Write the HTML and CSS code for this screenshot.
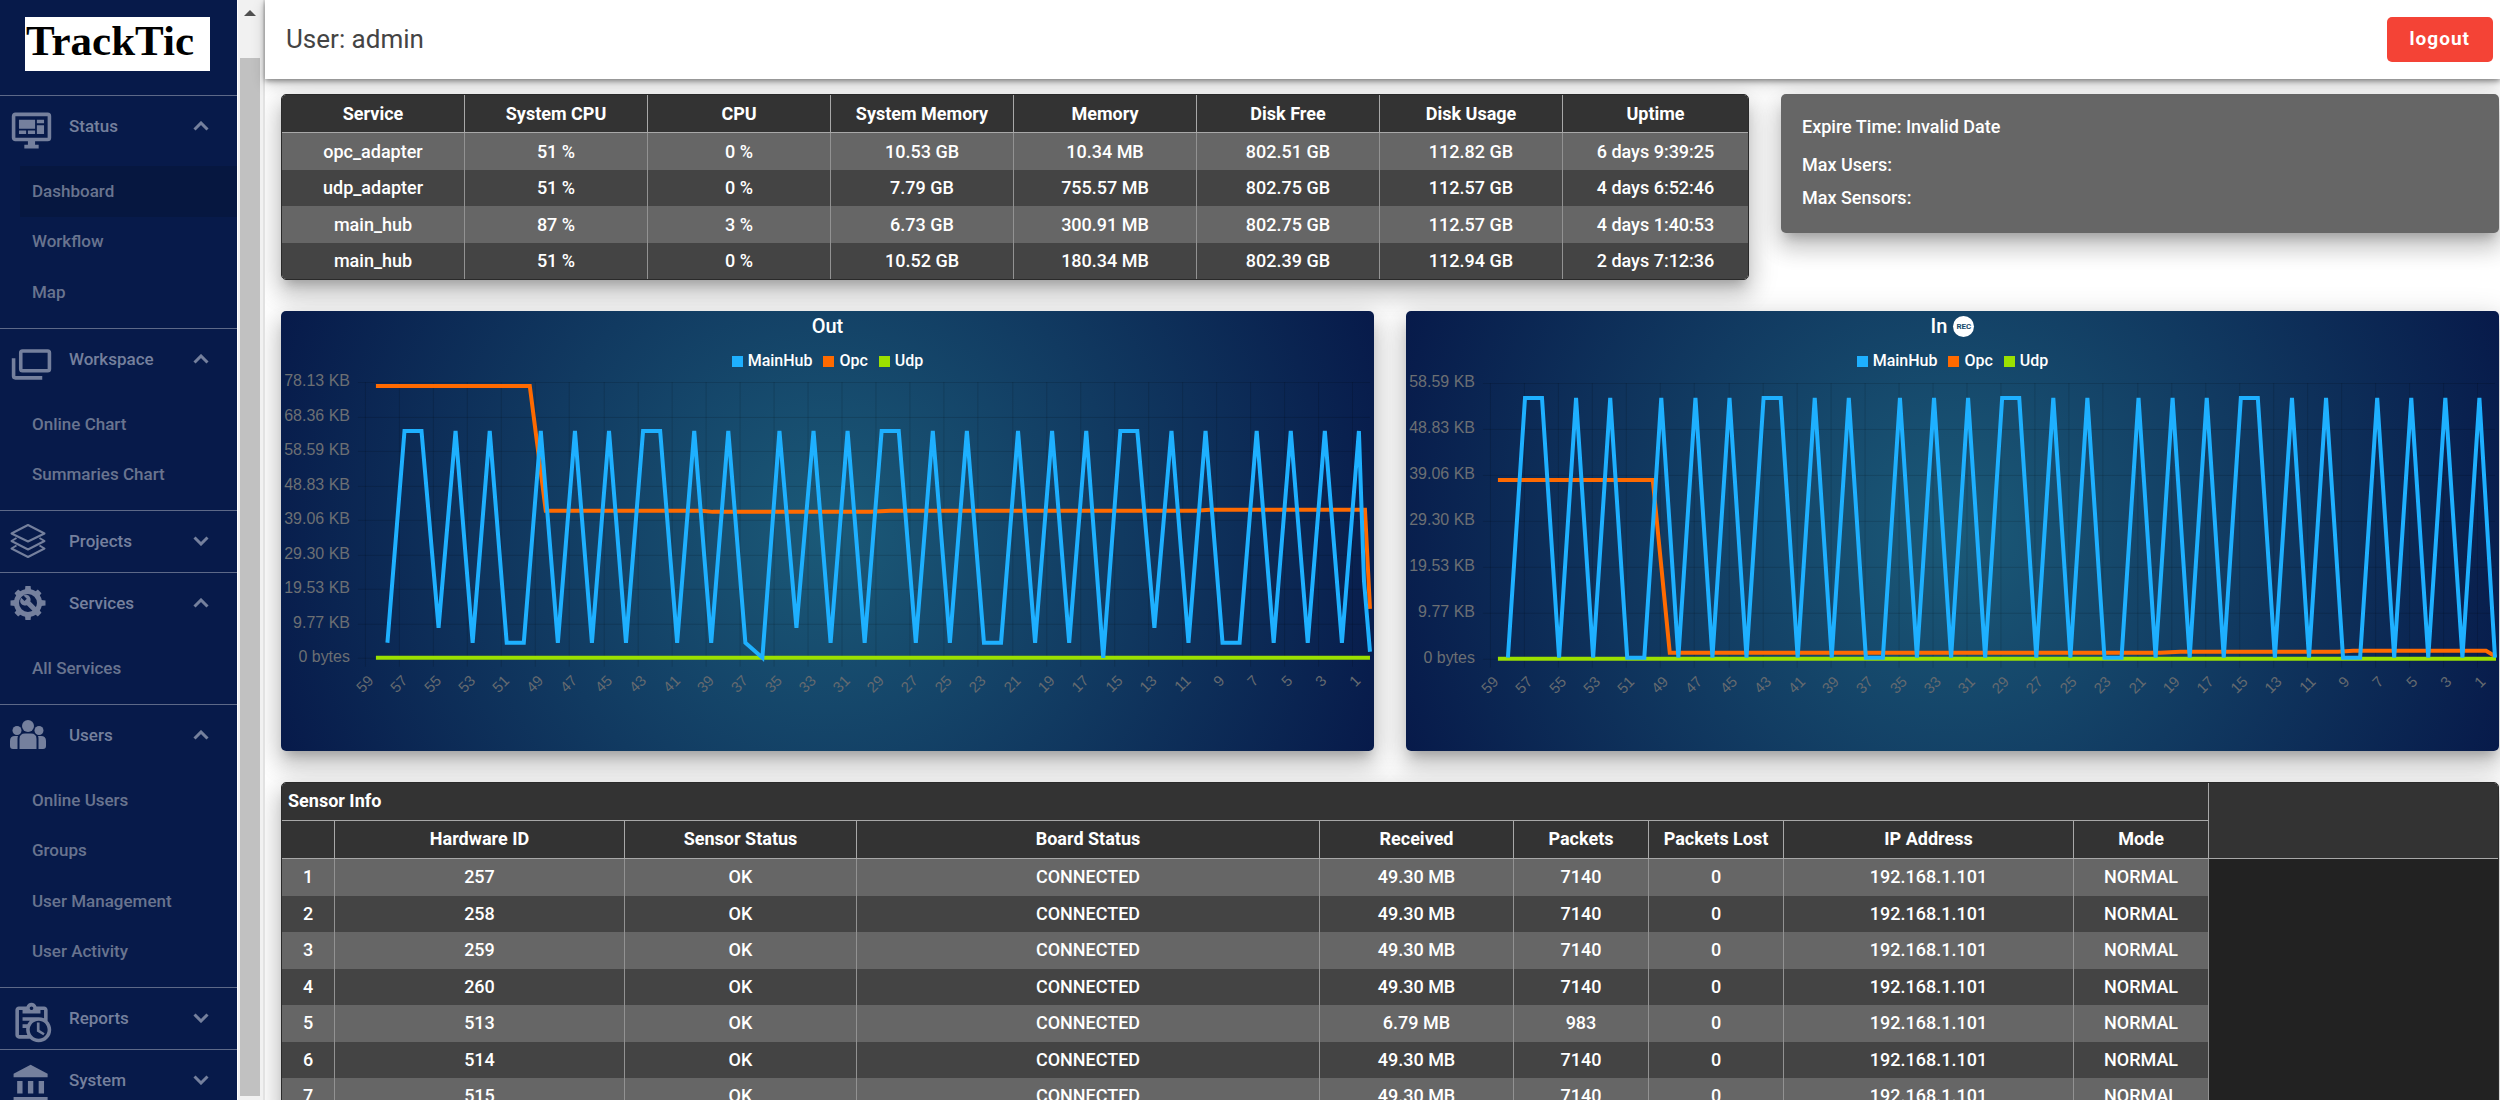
FILE: index.html
```html
<!DOCTYPE html>
<html lang="en">
<head>
<meta charset="utf-8">
<meta name="viewport" content="width=device-width, initial-scale=1">
<title>TrackTic</title>
<link rel="stylesheet" href="styles.css">
</head>
<body>
<div class="app">
  <aside class="sidebar">
    <div class="brand"><span class="logo">TrackTic</span></div>
    <nav class="menu" aria-label="Main">
      <section class="group">
        <button class="group-head" type="button" aria-expanded="true">
          <svg class="icon" viewBox="0 0 24 24"><path d="M21,16V4H3V16H21M21,2A2,2 0 0,1 23,4V16A2,2 0 0,1 21,18H14V20H16V22H8V20H10V18H3C1.89,18 1,17.1 1,16V4C1,2.89 1.89,2 3,2H21M5,6H14V11H5V6M15,6H19V8H15V6M19,9V14H15V9H19M5,12H9V14H5V12M10,12H14V14H10V12Z"/></svg>
          <span class="group-name">Status</span>
          <svg class="chevron" viewBox="0 0 16 10"><path d="M1.500 8.500 8 2l6.500 6.500"/></svg>
        </button>
        <div class="items">
          <a class="item active" href="#dashboard" aria-current="page">Dashboard</a>
          <a class="item" href="#workflow">Workflow</a>
          <a class="item" href="#map">Map</a>
        </div>
      </section>
      <section class="group">
        <button class="group-head" type="button" aria-expanded="true">
          <svg class="icon" viewBox="0 0 24 24"><path fill-rule="evenodd" d="M7 4H21A2 2 0 0 1 23 6V15A2 2 0 0 1 21 17H7A2 2 0 0 1 5 15V6A2 2 0 0 1 7 4ZM7 6V15H21V6ZM3 19H18V21H3A2 2 0 0 1 1 19V9H3Z"/></svg>
          <span class="group-name">Workspace</span>
          <svg class="chevron" viewBox="0 0 16 10"><path d="M1.500 8.500 8 2l6.500 6.500"/></svg>
        </button>
        <div class="items">
          <a class="item" href="#online-chart">Online Chart</a>
          <a class="item" href="#summaries-chart">Summaries Chart</a>
        </div>
      </section>
      <section class="group">
        <button class="group-head" type="button" aria-expanded="false">
          <svg class="icon compact" viewBox="0 0 36 36"><g fill="none" stroke="currentColor" stroke-width="2" stroke-linejoin="round"><path d="M18 2 34.500 10.500 18 18.500 1.500 10.500Z"/><path d="M6.500 15 1.500 18 18 26.500 34.500 18 29.500 15"/><path d="M6.500 22.500 1.500 25.500 18 34 34.500 25.500 29.500 22.500"/></g></svg>
          <span class="group-name">Projects</span>
          <svg class="chevron" viewBox="0 0 16 10"><path d="M1.500 1.500 8 8l6.500-6.500"/></svg>
        </button>
      </section>
      <section class="group">
        <button class="group-head" type="button" aria-expanded="true">
          <svg class="icon compact" viewBox="0 0 36 36"><circle cx="18" cy="18" r="11.500" fill="none" stroke="currentColor" stroke-width="5"/><path d="M15 5 15.400 1H20.600L21 5ZM15 31 15.400 35H20.600L21 31ZM5 15 .500 15.400V20.600L5 21ZM31 15 35.500 15.400V20.600L31 21Z"/><path transform="rotate(45 18 18)" d="M15 5 15.400 1.500H20.600L21 5ZM15 31 15.400 34.500H20.600L21 31ZM5 15 1.500 15.400V20.600L5 21ZM31 15 34.500 15.400V20.600L31 21Z"/><path d="M11.200 12.700 14.500 16 16.800 13.700 13.500 10.400C16 9.200 18.600 10 19.900 12.200 20.700 13.600 20.800 15 20.300 16.600L28 24.300 24.500 27.800 16.900 20.200C14.900 20.900 12.800 20.400 11.400 19 9.800 17.300 9.700 14.800 11.200 12.700Z"/></svg>
          <span class="group-name">Services</span>
          <svg class="chevron" viewBox="0 0 16 10"><path d="M1.500 8.500 8 2l6.500 6.500"/></svg>
        </button>
        <div class="items">
          <a class="item" href="#all-services">All Services</a>
        </div>
      </section>
      <section class="group">
        <button class="group-head" type="button" aria-expanded="true">
          <svg class="icon compact" viewBox="0 0 36 36"><circle cx="18" cy="9" r="6"/><circle cx="7" cy="13.500" r="4.500"/><circle cx="29" cy="13.500" r="4.500"/><path d="M9.500 32V22Q9.500 16.500 15 16.500H21Q26.500 16.500 26.500 22V32ZM8 19Q7.500 20 7.500 22V32H3Q0 32 0 29V24Q0 19 5 19ZM28 19Q28.500 20 28.500 22V32H33Q36 32 36 29V24Q36 19 31 19Z"/></svg>
          <span class="group-name">Users</span>
          <svg class="chevron" viewBox="0 0 16 10"><path d="M1.500 8.500 8 2l6.500 6.500"/></svg>
        </button>
        <div class="items">
          <a class="item" href="#online-users">Online Users</a>
          <a class="item" href="#groups">Groups</a>
          <a class="item" href="#user-management">User Management</a>
          <a class="item" href="#user-activity">User Activity</a>
        </div>
      </section>
      <section class="group">
        <button class="group-head" type="button" aria-expanded="false">
          <svg class="icon" viewBox="0 0 24 24"><path d="M21 11.110V5C21 3.900 20.110 3 19 3H14.820C14.400 1.840 13.300 1 12 1S9.600 1.840 9.180 3H5C3.900 3 3 3.900 3 5V19C3 20.110 3.900 21 5 21H11.110C12.370 22.240 14.090 23 16 23C19.870 23 23 19.870 23 16C23 14.090 22.240 12.370 21 11.110M12 3C12.550 3 13 3.450 13 4S12.550 5 12 5 11 4.550 11 4 11.450 3 12 3M5 19V5H7V7H17V5H19V9.680C18.090 9.250 17.080 9 16 9H7V11H11.100C10.500 11.570 10.040 12.250 9.680 13H7V15H9.080C9.030 15.330 9 15.660 9 16C9 17.080 9.250 18.090 9.680 19H5M16 21C13.240 21 11 18.760 11 16C11 13.240 13.240 11 16 11C18.760 11 21 13.240 21 16C21 18.760 18.760 21 16 21M16.500 16.250L19.360 17.940L18.610 19.160L15 17V12H16.500V16.250Z"/></svg>
          <span class="group-name">Reports</span>
          <svg class="chevron" viewBox="0 0 16 10"><path d="M1.500 1.500 8 8l6.500-6.500"/></svg>
        </button>
      </section>
      <section class="group">
        <button class="group-head" type="button" aria-expanded="false">
          <svg class="icon" viewBox="0 0 24 24"><path d="M11.500,1L2,6V8H21V6M16,10V17H19V10M2,22H21V19H2M10,10V17H13V10M4,10V17H7V10H4Z"/></svg>
          <span class="group-name">System</span>
          <svg class="chevron" viewBox="0 0 16 10"><path d="M1.500 1.500 8 8l6.500-6.500"/></svg>
        </button>
      </section>
    </nav>
  </aside>
  <div class="scrollbar" aria-hidden="true">
    <span class="scroll-up"></span>
    <span class="scroll-thumb"></span>
  </div>
  <div class="page">
    <header class="topbar">
      <span class="user">User: admin</span>
      <button class="logout" type="button">logout</button>
    </header>
    <main class="content">
      <section class="card services">
        <table class="grid">
          <colgroup><col class="c-metric" span="7"><col></colgroup>
          <thead>
            <tr><th>Service</th><th>System CPU</th><th>CPU</th><th>System Memory</th><th>Memory</th><th>Disk Free</th><th>Disk Usage</th><th>Uptime</th></tr>
          </thead>
          <tbody>
            <tr><td>opc_adapter</td><td>51 %</td><td>0 %</td><td>10.53 GB</td><td>10.34 MB</td><td>802.51 GB</td><td>112.82 GB</td><td>6 days 9:39:25</td></tr>
            <tr><td>udp_adapter</td><td>51 %</td><td>0 %</td><td>7.79 GB</td><td>755.57 MB</td><td>802.75 GB</td><td>112.57 GB</td><td>4 days 6:52:46</td></tr>
            <tr><td>main_hub</td><td>87 %</td><td>3 %</td><td>6.73 GB</td><td>300.91 MB</td><td>802.75 GB</td><td>112.57 GB</td><td>4 days 1:40:53</td></tr>
            <tr><td>main_hub</td><td>51 %</td><td>0 %</td><td>10.52 GB</td><td>180.34 MB</td><td>802.39 GB</td><td>112.94 GB</td><td>2 days 7:12:36</td></tr>
          </tbody>
        </table>
      </section>
      <section class="card license">
        <p class="expire">Expire Time: Invalid Date</p>
        <p>Max Users:</p>
        <p>Max Sensors:</p>
      </section>
      <section class="card chart">
        <h2 class="chart-title">Out</h2>
        <ul class="legend">
          <li class="main-hub">MainHub</li><li class="opc">Opc</li><li class="udp">Udp</li>
        </ul>
        <svg class="plot" id="plot-out" viewBox="0 0 1094 380" role="img" aria-label="Outgoing traffic"></svg>
      </section>
      <section class="card chart">
        <h2 class="chart-title">In <span class="rec">REC</span></h2>
        <ul class="legend">
          <li class="main-hub">MainHub</li><li class="opc">Opc</li><li class="udp">Udp</li>
        </ul>
        <svg class="plot" id="plot-in" viewBox="0 0 1094 380" role="img" aria-label="Incoming traffic"></svg>
      </section>
      <section class="card sensors">
        <table class="grid">
          <colgroup>
            <col class="c-index"><col class="c-wide"><col class="c-status"><col class="c-board"><col class="c-received"><col class="c-narrow"><col class="c-narrow"><col class="c-wide"><col class="c-narrow"><col>
          </colgroup>
          <thead>
            <tr><th class="table-title" colspan="9">Sensor Info</th><th class="spare" rowspan="2"></th></tr>
            <tr><th></th><th>Hardware ID</th><th>Sensor Status</th><th>Board Status</th><th>Received</th><th>Packets</th><th>Packets Lost</th><th>IP Address</th><th>Mode</th></tr>
          </thead>
          <tbody>
            <tr><td>1</td><td>257</td><td>OK</td><td>CONNECTED</td><td>49.30 MB</td><td>7140</td><td>0</td><td>192.168.1.101</td><td>NORMAL</td><td class="spare"></td></tr>
            <tr><td>2</td><td>258</td><td>OK</td><td>CONNECTED</td><td>49.30 MB</td><td>7140</td><td>0</td><td>192.168.1.101</td><td>NORMAL</td><td class="spare"></td></tr>
            <tr><td>3</td><td>259</td><td>OK</td><td>CONNECTED</td><td>49.30 MB</td><td>7140</td><td>0</td><td>192.168.1.101</td><td>NORMAL</td><td class="spare"></td></tr>
            <tr><td>4</td><td>260</td><td>OK</td><td>CONNECTED</td><td>49.30 MB</td><td>7140</td><td>0</td><td>192.168.1.101</td><td>NORMAL</td><td class="spare"></td></tr>
            <tr><td>5</td><td>513</td><td>OK</td><td>CONNECTED</td><td>6.79 MB</td><td>983</td><td>0</td><td>192.168.1.101</td><td>NORMAL</td><td class="spare"></td></tr>
            <tr><td>6</td><td>514</td><td>OK</td><td>CONNECTED</td><td>49.30 MB</td><td>7140</td><td>0</td><td>192.168.1.101</td><td>NORMAL</td><td class="spare"></td></tr>
            <tr><td>7</td><td>515</td><td>OK</td><td>CONNECTED</td><td>49.30 MB</td><td>7140</td><td>0</td><td>192.168.1.101</td><td>NORMAL</td><td class="spare"></td></tr>
          </tbody>
        </table>
      </section>
    </main>
  </div>
</div>
<script src="charts.js"></script>
</body>
</html>
```
FILE: styles.css
```css
* { box-sizing: border-box; }

body {
  margin: 0;
  background: #fff;
  color: #444;
  font: 500 18px/20px Roboto, "Liberation Sans", sans-serif;
}

button { font: inherit; border: 0; cursor: pointer; }

.app {
  display: flex;
  height: 100vh;
  overflow: hidden;
}

/* Sidebar */
.sidebar {
  flex: none;
  width: 238px;
  overflow: hidden;
  background: #071a4a;
  border-right: 1px solid #fff;
  color: #75809d;
  font-size: 17px;
}

.brand {
  height: 95px;
  padding: 17px 27px 0 25px;
}

.logo {
  display: block;
  height: 54px;
  padding-left: 1px;
  background: #fff;
  color: #000;
  font: 700 43px/48px "Liberation Serif", serif;
}

.group { border-top: 1px solid #5d6988; }

.group-head {
  display: flex;
  align-items: center;
  width: 100%;
  height: 61px;
  padding: 0 28px 2px 10px;
  background: none;
  color: inherit;
  text-align: left;
}

.icon {
  flex: none;
  align-self: flex-start;
  width: 43px;
  height: 43px;
  margin: 13px 16px 0 0;
  fill: currentColor;
}

.icon.compact {
  align-self: center;
  width: 36px;
  height: 36px;
  margin: 0 23px 0 0;
}

.group-name { flex: 1; }

.chevron {
  width: 16px;
  height: 10px;
  fill: none;
  stroke: currentColor;
  stroke-width: 3;
}

.items { padding: 9px 0 10px 20px; }

.item {
  display: flex;
  align-items: center;
  height: 50px;
  padding: 0 0 2px 12px;
  color: #69748f;
  text-decoration: none;
}

.item:nth-child(odd) { height: 51px; }
.item.active { background: #061740; }

/* Scrollbar beside the sidebar */
.scrollbar {
  flex: none;
  display: flex;
  flex-direction: column;
  width: 27px;
  padding: 10px 3px 4px 2px;
  background: #f1f1f1;
  border-right: 2px solid #e2e2e2;
}

.scroll-up {
  align-self: center;
  margin-bottom: 42px;
  border: 6px solid transparent;
  border-top: 0;
  border-bottom-color: #505050;
}

.scroll-thumb { flex: 1; background: #c1c1c1; }

/* Page */
.page {
  flex: 1;
  min-width: 0;
  display: flex;
  flex-direction: column;
}

.topbar {
  position: relative;
  z-index: 1;
  flex: none;
  display: flex;
  align-items: center;
  justify-content: space-between;
  height: 79px;
  padding: 0 7px 1px 21px;
  background: #fff;
  box-shadow: 0 2px 5px rgba(0, 0, 0, .4), 0 5px 13px rgba(0, 0, 0, .2);
}

.user { font-size: 26px; font-weight: 400; line-height: 32px; }

.logout {
  height: 45px;
  padding: 0 23px;
  border-radius: 5px;
  background: #f44336;
  color: #fff;
  font-size: 19px;
  font-weight: 700;
  letter-spacing: 1px;
}

.content {
  flex: 1;
  min-height: 0;
  overflow: hidden;
  display: grid;
  grid-template-columns: repeat(12, 1fr);
  grid-auto-rows: max-content;
  align-content: start;
  align-items: start;
  gap: 31px 32px;
  padding: 15px 1px 0 16px;
}

.card {
  overflow: hidden;
  border-radius: 5px;
  box-shadow: 0 9px 10px -5px rgba(0, 0, 0, .2), 0 15px 22px 2px rgba(0, 0, 0, .14), 0 6px 28px 5px rgba(0, 0, 0, .12);
}

.services { grid-column: span 8; }
.license { grid-column: span 4; }
.chart { grid-column: span 6; }
.sensors { grid-column: span 12; }

.services, .sensors { border: 1px solid #2a2a2a; }

.license {
  padding: 23px 21px 12px;
  background: #666;
  color: #fff;
}

.license p { margin: 0 0 13px; }
.license .expire { margin-bottom: 18px; }

/* Tables */
.grid {
  width: 100%;
  table-layout: fixed;
  border-spacing: 0;
  color: #fff;
}

.grid th, .grid td {
  padding: 0;
  border-right: 1px solid #929292;
  text-align: center;
}

.grid th {
  height: 38px;
  background: #333;
  border-color: #a8a8a8;
  border-bottom: 1px solid #a8a8a8;
  font-weight: 700;
}

.grid td { height: 37px; background: #666; }
.grid tr:nth-child(even) td { height: 36px; background: #444; }
.grid tr td.spare, .grid tr:nth-child(even) td.spare { background: #222; }
.grid .spare, .services td:last-child, .services th:last-child { border-right: 0; }
.grid .table-title { padding-left: 6px; text-align: left; }

.c-metric { width: 183px; }
.c-index { width: 53px; }
.c-wide { width: 290px; }
.c-status { width: 232px; }
.c-board { width: 463px; }
.c-received { width: 194px; }
.c-narrow { width: 135px; }

/* Charts */
.chart {
  background: radial-gradient(circle, #1b5a78, #071a4a);
  color: #fff;
}

.chart-title {
  display: flex;
  align-items: center;
  justify-content: center;
  gap: 6px;
  height: 30px;
  margin: 0;
  font-size: 20px;
  font-weight: 500;
}

.rec {
  width: 21px;
  height: 21px;
  border-radius: 50%;
  background: #fff;
  color: #164a6b;
  font-size: 8px;
  font-weight: 700;
  line-height: 21px;
  text-align: center;
}

.legend {
  display: flex;
  justify-content: center;
  gap: 11px;
  margin: 0;
  padding: 10px 0 0;
  list-style: none;
  font-size: 16px;
}

.legend li { display: flex; align-items: center; gap: 5px; }

.legend li::before {
  content: "";
  width: 11px;
  height: 11px;
  background: currentcolor;
}

.legend .main-hub::before { background: #1eb0ff; }
.legend .opc::before { background: #ff6a00; }
.legend .udp::before { background: #9be000; }

.plot { display: block; width: 100%; height: auto; }

.plot text {
  fill: #6c6f73;
  font: 400 16px "Liberation Sans", sans-serif;
  dominant-baseline: central;
}

.plot .tick-x { font-size: 15px; text-anchor: end; fill: #656a6f; }
.plot .tick-y { text-anchor: end; }
.plot .rule { stroke: #000; stroke-opacity: .14; stroke-width: 1; }
.plot polyline { fill: none; stroke-width: 4; }
.plot .line-opc { stroke: #ff6a00; }
.plot .line-udp { stroke: #9be000; }
.plot .line-main { stroke: #1eb0ff; }
```
FILE: charts.js
```js
const NS = 'http://www.w3.org/2000/svg';

function add(svg, name, attrs, text) {
  const el = document.createElementNS(NS, name);
  for (const key in attrs) el.setAttribute(key, attrs[key]);
  if (text) el.textContent = text;
  svg.appendChild(el);
}

// One letter per second: H high, L low, M a slightly raised low, Z zero.
const pattern =
  'LHHMHLHLLHLHLHLHHLHLHLZHMHLHLHHLHLHLLHLHLHZHHMHLHLLHLHLHLH';

function draw(id, opt) {
  const svg = document.getElementById(id);
  const rows = opt.labels.length - 1;
  const step = (opt.bottom - opt.top) / rows;

  opt.labels.forEach((label, i) => {
    const y = Math.round(opt.top + i * step) + 0.5;
    add(svg, 'line', { class: 'rule', x1: 77, x2: 1090, y1: y, y2: y });
    add(svg, 'text', { class: 'tick-y', x: 69, y: y - 2 }, label);
  });

  for (let i = 0; i < 30; i++) {
    const x = Math.round(84 + i * 34.08) + 0.5;
    add(svg, 'line', { class: 'rule', x1: x, x2: x, y1: opt.top, y2: opt.bottom + 9 });
    const tx = x + 5, ty = opt.bottom + 20;
    add(svg, 'text', { class: 'tick-x', x: tx, y: ty, transform: `rotate(-45 ${tx} ${ty})` }, String(59 - 2 * i));
  }

  const main = [...pattern].map((c, k) => `${(opt.start + k * 17.06).toFixed(1)},${opt.levels[c]}`);
  add(svg, 'polyline', { class: 'line-opc', points: opt.opc });
  add(svg, 'polyline', { class: 'line-udp', points: opt.udp });
  add(svg, 'polyline', { class: 'line-main', points: main.join(' ') + ' ' + opt.tail });
}

draw('plot-out', {
  labels: ['78.13 KB', '68.36 KB', '58.59 KB', '48.83 KB', '39.06 KB', '29.30 KB', '19.53 KB', '9.77 KB', '0 bytes'],
  top: 11, bottom: 287, start: 106.5,
  levels: { H: 60, L: 272, M: 257, Z: 287 },
  opc: '95,15 249,15 265,140 421,140 432,141 590,141 610,140 915,140 930,139 1085,139 1090,238',
  udp: '95,287 1090,287',
  tail: '1084,210 1090,281'
});

draw('plot-in', {
  labels: ['58.59 KB', '48.83 KB', '39.06 KB', '29.30 KB', '19.53 KB', '9.77 KB', '0 bytes'],
  top: 12, bottom: 288, start: 102,
  levels: { H: 27, L: 287, M: 287, Z: 287 },
  opc: '92,109 247,109 264,282 755,282 775,281 933,281 948,280 1081,280 1091,286',
  udp: '92,288 1091,288',
  tail: '1090,287'
});
```
